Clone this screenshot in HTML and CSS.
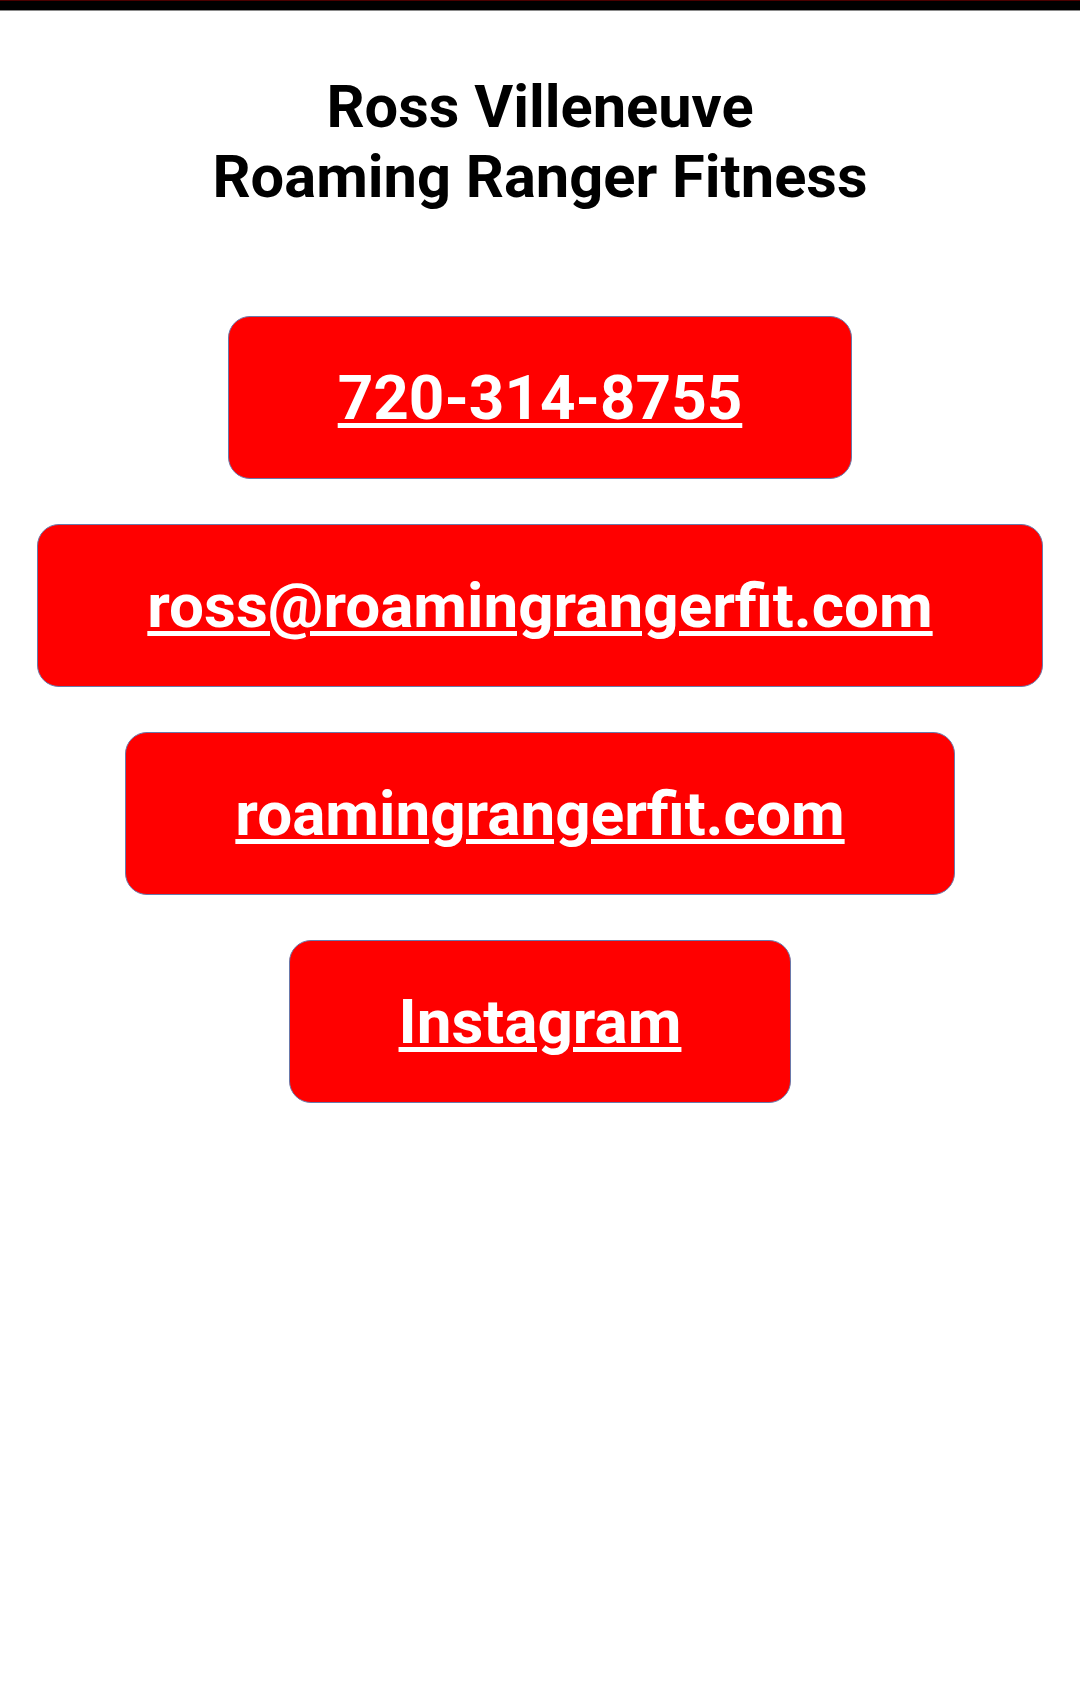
FILE: index.html
```html
<!DOCTYPE html>
<html>
<head>
<meta charset="utf-8">
<title>Ross Villeneuve - Roaming Ranger Fitness</title>
<link rel="stylesheet" href="styles.css">
</head>
<body>
<div class="topbar"></div>
<main class="page">
  <h1 class="title">Ross Villeneuve<br>Roaming Ranger Fitness</h1>
  <div class="links">
    <a class="btn" href="#">720-314-8755</a>
    <a class="btn" href="#">ross@roamingrangerfit.com</a>
    <a class="btn" href="#">roamingrangerfit.com</a>
    <a class="btn" href="#">Instagram</a>
  </div>
</main>
</body>
</html>
```
FILE: styles.css
```css
html, body {
  margin: 0;
  padding: 0;
  background: #ffffff;
}
body {
  font-family: Roboto, "Liberation Sans", sans-serif;
}
.topbar {
  height: 9px;
  background: #000;
  border-top: 1px solid #4a0000;
  border-bottom: 1px solid #8a8a8a;
}
.page {
  display: flex;
  flex-direction: column;
  align-items: center;
  padding-top: 61px;
}
.title {
  margin: 0;
  font-size: 59.6px;
  font-weight: 700;
  line-height: normal;
  text-align: center;
  color: #000;
}
.links {
  display: flex;
  flex-direction: column;
  align-items: center;
  gap: 45px;
  margin-top: 104px;
}
.btn {
  display: block;
  padding: 44px 109px;
  background: #ff0000;
  border: 1px solid #6a79aa;
  border-radius: 22px;
  color: #fff;
  font-size: 62px;
  font-weight: 700;
  line-height: normal;
  text-decoration: underline;
  text-decoration-thickness: 5px;
  text-underline-offset: 4px;
}
```
